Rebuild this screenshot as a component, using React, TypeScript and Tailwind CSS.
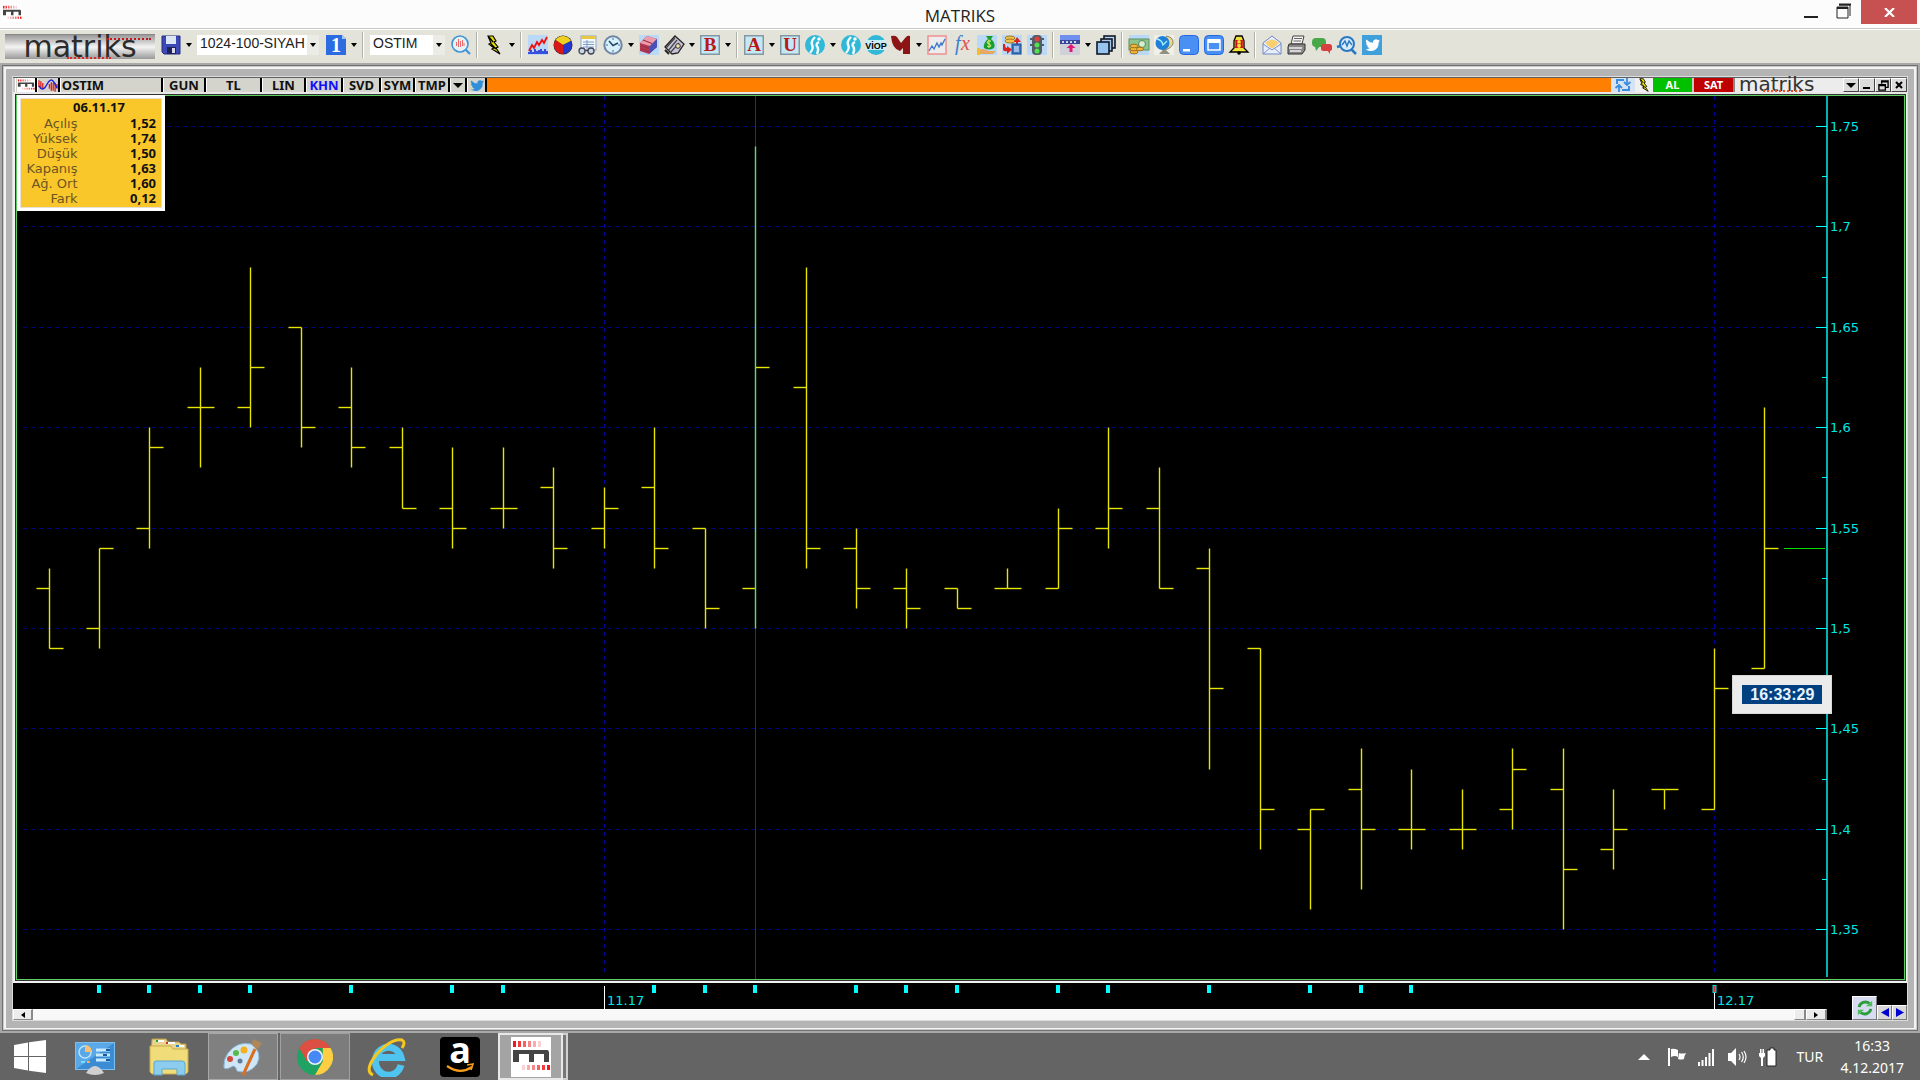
import React from "react";

/* ---------- chart data: open, high, low, close ---------- */
type Bar = [number, number, number, number];
const BARS: Bar[] = [
  [1.52, 1.53, 1.49, 1.49],
  [1.5, 1.54, 1.49, 1.54],
  [1.55, 1.6, 1.54, 1.59],
  [1.61, 1.63, 1.58, 1.61],
  [1.61, 1.68, 1.6, 1.63],
  [1.65, 1.65, 1.59, 1.6],
  [1.61, 1.63, 1.58, 1.59],
  [1.59, 1.6, 1.56, 1.56],
  [1.56, 1.59, 1.54, 1.55],
  [1.56, 1.59, 1.55, 1.56],
  [1.57, 1.58, 1.53, 1.54],
  [1.55, 1.57, 1.54, 1.56],
  [1.57, 1.6, 1.53, 1.54],
  [1.55, 1.55, 1.5, 1.51],
  [1.52, 1.74, 1.5, 1.63],
  [1.62, 1.68, 1.53, 1.54],
  [1.54, 1.55, 1.51, 1.52],
  [1.52, 1.53, 1.5, 1.51],
  [1.52, 1.52, 1.51, 1.51],
  [1.52, 1.53, 1.52, 1.52],
  [1.52, 1.56, 1.52, 1.55],
  [1.55, 1.6, 1.54, 1.56],
  [1.56, 1.58, 1.52, 1.52],
  [1.53, 1.54, 1.43, 1.47],
  [1.49, 1.49, 1.39, 1.41],
  [1.4, 1.41, 1.36, 1.41],
  [1.42, 1.44, 1.37, 1.4],
  [1.4, 1.43, 1.39, 1.4],
  [1.4, 1.42, 1.39, 1.4],
  [1.41, 1.44, 1.4, 1.43],
  [1.42, 1.44, 1.35, 1.38],
  [1.39, 1.42, 1.38, 1.4],
  [1.42, 1.42, 1.41, 1.42],
  [1.41, 1.49, 1.41, 1.47],
  [1.48, 1.61, 1.48, 1.54],
];
const PRICES: [number, string][] = [
  [1.75, "1,75"],
  [1.7, "1,7"],
  [1.65, "1,65"],
  [1.6, "1,6"],
  [1.55, "1,55"],
  [1.5, "1,5"],
  [1.45, "1,45"],
  [1.4, "1,4"],
  [1.35, "1,35"],
];
const MARKS = [1, 2, 3, 4, 6, 8, 9, 12, 13, 14, 16, 17, 18, 20, 21, 23, 25, 26, 27];
const CURSOR = 14;

const barX = (i: number) => Math.floor(32 + i * 50.47) + 0.5;
const priceY = (p: number) => Math.round(30 + (1.75 - p) * 2008) + 0.5;

function Chart() {
  return (
    <svg viewBox="0 0 1887 883" className="block h-auto w-full bg-black" role="img" aria-label="OSTIM">
      {PRICES.map(([p]) => (
        <line key={p} x1="6" x2="1800" y1={priceY(p)} y2={priceY(p)} stroke="#000080" strokeDasharray="4 4" />
      ))}
      {[11, 33].map((i) => (
        <line key={i} x1={barX(i)} x2={barX(i)} y1="0" y2="880" stroke="#0000a0" strokeDasharray="4 4" />
      ))}
      <line x1={barX(CURSOR)} x2={barX(CURSOR)} y1="0" y2="883" stroke="#800080" />
      {BARS.map(([o, h, l, c], i) => {
        const x = barX(i);
        return (
          <g key={i} stroke="#e6e600" strokeWidth="1.4">
            <line x1={x - 13} x2={x} y1={priceY(o)} y2={priceY(o)} />
            <line x1={x} x2={x + 14} y1={priceY(c)} y2={priceY(c)} />
            <line x1={x} x2={x} y1={priceY(h)} y2={priceY(l)} stroke={i === CURSOR ? "#5ee070" : "#e6e600"} />
          </g>
        );
      })}
      <line x1="1767" x2="1808" y1={priceY(1.54)} y2={priceY(1.54)} stroke="#00e000" />
      <line x1="1810" x2="1810" y1="0" y2="881" stroke="#00b4b4" strokeWidth="2" />
      {PRICES.map(([p, label]) => (
        <g key={p}>
          <line x1="1799" x2="1810" y1={priceY(p)} y2={priceY(p)} stroke="#00ffff" />
          {p > 1.35 && <line x1="1805" x2="1810" y1={priceY(p - 0.025)} y2={priceY(p - 0.025)} stroke="#00ffff" />}
          <text x="1813" y={priceY(p) + 4.5} fill="#00e5e5" className="font-['DejaVu_Sans',sans-serif] text-[13px]">
            {label}
          </text>
        </g>
      ))}
    </svg>
  );
}

function TimeAxis() {
  return (
    <svg viewBox="0 0 1814 25" className="block h-auto w-full">
      {MARKS.map((i) => (
        <rect key={i} x={barX(i) + 1.5} y="1" width="4" height="8" fill="#00ffff" />
      ))}
      <path d="M591.5 2V25M1701.5 2V25" stroke="#ffffff" />
      <rect x="1700" y="1.5" width="3" height="7" fill="#e03030" stroke="#00dddd" />
      <g fill="#00e5e5" className="font-['DejaVu_Sans',sans-serif] text-[13px]">
        <text x="594" y="21">11.17</text>
        <text x="1704" y="21">12.17</text>
      </g>
    </svg>
  );
}

/* ---------- icons ---------- */
function Ico({ children }: { children: React.ReactNode }) {
  return (
    <svg viewBox="0 0 20 20" className="h-5 w-5 overflow-visible">
      {children}
    </svg>
  );
}

function MMark({ className }: { className: string }) {
  return (
    <svg viewBox="0 0 40 40" className={className} preserveAspectRatio="none">
      <rect width="40" height="40" fill="#ffffff" />
      {[0, 1, 2, 3, 4, 5].map((i) => (
        <g key={i} fill="#f01818">
          <rect x={2 + i * 5} y="4" width="3" height="6" opacity={1 - i * 0.16} />
          <rect x={36 - i * 5} y="28" width="3" height="5" opacity={1 - i * 0.16} />
        </g>
      ))}
      <path d="M2 13H36Q38 13 38 16V25H33V17H23V25H18V17H8V25H2Z" fill="#444" />
    </svg>
  );
}

const bolt = (
  <>
    <path d="M4 1L9 1L12 6L10 7L14 12L12 13L16 19L8 14L10 13L5 9L7 8Z" fill="#e8e000" stroke="#000" strokeWidth="1.2" />
    <path d="M5 2L9 7M7 9L12 14" stroke="#000" strokeWidth="1.400" />
  </>
);
const tweet = (
  <path d="M18 5.2q-.8.5-1.6.6q.8-.5 1.2-1.4q-.9.5-1.7.7a3 3 0 0 0-5 2.7q-3.9-.2-6.5-3.3q-1.3 2.5.8 4.1q-.7 0-1.3-.4q.1 2.2 2.3 2.9q-.6.2-1.2 0q.7 1.9 2.8 2q-1.900 1.500-4.300 1.300q7.500 4 12-2q1.300-2.200 1.100-5.200q.9-.7 1.400-2Z" />
);
const sky = <rect width="20" height="20" fill="#b9d9f7" />;

const ICONS: Record<string, React.ReactNode> = {
  save: (
    <>
      <path d="M1 1H19V19H3L1 17Z" fill="#3c48b8" stroke="#252c80" />
      <rect x="5" y="1" width="10" height="8" fill="#dce4f8" />
      <rect x="6" y="12" width="9" height="7" fill="#1d2258" />
      <rect x="11" y="13" width="3" height="5" fill="#d8d8e8" />
    </>
  ),
  search: (
    <>
      <circle cx="9" cy="9" r="8" fill="#e8f0f4" stroke="#3d94d6" strokeWidth="1.600" />
      <path d="M14.500 14.500L19 19" stroke="#3d94d6" strokeWidth="2.200" />
      <path d="M5.500 7V11M7.500 4V12M9.500 6V12M11.500 5V11M13 8V11" stroke="#e86a6a" />
    </>
  ),
  bolt,
  chart: (
    <>
      {sky}
      <path d="M1 16L4 10L6 13L9 7L11 10L14 5L16 8L19 2" fill="none" stroke="#f01010" strokeWidth="1.800" />
      <path d="M1 19V17M3 19V15M5 19V17M7 19V14M9 19V16M11 19V15M13 19V14M15 19V16M17 19V14M19 19V16" stroke="#1020d0" strokeWidth="1.500" />
    </>
  ),
  pie: (
    <>
      <circle cx="10" cy="10" r="9.500" fill="#222" />
      <path d="M10 10L2.500 5A9 9 0 0 1 18 6Z" fill="#f0d020" />
      <path d="M10 10L18 6A9 9 0 0 1 10 19Z" fill="#2038d0" />
      <path d="M10 10L10 19A9 9 0 0 1 2.500 5Z" fill="#d81818" />
    </>
  ),
  report: (
    <>
      <rect x="3" y="1" width="15" height="14" fill="#f4f8ff" stroke="#8ea4c0" />
      <rect x="3" y="1" width="15" height="3" fill="#e8c840" />
      <path d="M5 7H16M5 9.500H16M5 12H16M9 5V14" stroke="#7d9cc8" />
      <circle cx="4" cy="16" r="3" fill="#c8d8e4" stroke="#445" strokeWidth="1.300" />
      <circle cx="13" cy="16" r="3" fill="#c8d8e4" stroke="#445" strokeWidth="1.300" />
      <path d="M7 15.500H10" stroke="#445" strokeWidth="1.500" />
    </>
  ),
  clock: (
    <>
      <circle cx="10" cy="10" r="8.700" fill="#d8f0fa" stroke="#7084a4" strokeWidth="2" />
      <path d="M6 6L10 10.500L15 8" fill="none" stroke="#204868" strokeWidth="1.600" />
      <path d="M10 3V5M10 15V17M3 10H5M15 10H17" stroke="#4070a0" />
    </>
  ),
  book: (
    <>
      {sky}
      <path d="M1 8L8 1L18 4V12L10 19L1 16Z" fill="#b03850" />
      <path d="M1 8L8 1L18 4L11 11Z" fill="#ee9cac" />
      <path d="M4 5L13 8.500M2 10.500L10 13.500M2 14L10 17" fill="none" stroke="#a03048" strokeWidth="1.300" />
      <path d="M11 11L18 4V12L10 19Z" fill="#4850b8" />
    </>
  ),
  ledger: (
    <>
      <path d="M1 12L11 1L20 9L14 18L8 19Z" fill="#c8c4d8" stroke="#222" strokeWidth="1.300" />
      <path d="M2 13L11 3M4 16L13 5M6 18L15 8" stroke="#444" strokeWidth="1.200" />
      <circle cx="14" cy="11" r="2.300" fill="#f4e8b0" stroke="#333" />
      <path d="M1 15L5 19" stroke="#222" strokeWidth="2" />
    </>
  ),
  m: <path d="M0 1Q4 0 6 2L10 8L15 2Q17 0 19 1V19H12V13L9 16Q1 14 0 1Z" fill="#8c1414" />,
  line: (
    <>
      <rect x="1" y="1" width="18" height="18" fill="#ececec" stroke="#f09090" strokeWidth="1.500" />
      <path d="M2 16L5 11L7 14L10 8L12 12L14 8L15 10L18 4" fill="none" stroke="#3a78c8" strokeWidth="1.300" />
    </>
  ),
  money: (
    <>
      {sky}
      <path d="M9 1H16L14 4Q19 8 17 13Q12 16 7 13Q6 8 11 4Z" fill="#1c9c30" />
      <path d="M14 6Q10 5 10 8Q14 9 14 11Q12 13 10 11M12 4.500V13" fill="none" stroke="#d8f070" />
      <path d="M0 15L6 14L12 16H19L16 19H0Z" fill="#e8a860" />
      <rect y="13" width="3" height="7" fill="#f4c020" />
    </>
  ),
  transfer: (
    <>
      {sky}
      <ellipse cx="8" cy="3" rx="5" ry="2" fill="#f0c050" stroke="#a87818" />
      <ellipse cx="8" cy="6" rx="5" ry="2" fill="#f0c050" stroke="#a87818" />
      <path d="M15 2L19 7H16V10H14V7H12Z" fill="#e02020" />
      <path d="M1 9V15Q3 17 5 16V19L10 14.500L5 11V13Q3 13 3 9Z" fill="#e02020" />
      <rect x="10" y="9" width="9" height="10" fill="#3878c8" stroke="#205090" />
      <path d="M12 12H17M12 14H17M12 16H17" stroke="#fff" />
    </>
  ),
  traffic: (
    <>
      {sky}
      <rect x="5" y="0" width="10" height="20" rx="4" fill="#545c64" />
      <circle cx="10" cy="4" r="2.500" fill="#e04040" />
      <circle cx="10" cy="10" r="2.500" fill="#50e050" />
      <circle cx="10" cy="16" r="2.500" fill="#50e050" />
      <path d="M3 4H5M3 10H5M15 4H17M15 10H17" stroke="#333" strokeWidth="1.500" />
    </>
  ),
  split: (
    <>
      <rect width="20" height="5" fill="#7090f0" />
      <rect y="5" width="20" height="4" fill="#384898" />
      <path d="M2 7H18" stroke="#fff" strokeWidth="1.300" strokeDasharray="2 2" />
      <rect y="9" width="20" height="11" fill="#d0d0d8" />
      <path d="M11 9L15.500 13H12.500V17H9.500V13H6.500Z" fill="#e01878" />
    </>
  ),
  windows: (
    <g stroke="#101828" strokeWidth="1.600">
      <rect x="8" y="1" width="11" height="12" fill="#b8d4f0" />
      <rect x="5" y="4" width="11" height="12" fill="#a8c8ec" />
      <rect x="1" y="7" width="12" height="12" fill="#98c4f0" />
    </g>
  ),
  cash: (
    <>
      {sky}
      <rect y="4" width="20" height="11" fill="#8cc490" stroke="#5a9060" />
      <circle cx="13" cy="9" r="3.500" fill="#d8ecd0" stroke="#508858" />
      <g fill="#f0b840" stroke="#a87010">
        <ellipse cx="5" cy="17" rx="4" ry="1.800" />
        <ellipse cx="5" cy="14" rx="4" ry="1.800" />
        <ellipse cx="5" cy="11" rx="4" ry="1.800" />
        <ellipse cx="11" cy="14" rx="3.500" ry="1.800" />
      </g>
    </>
  ),
  globe: (
    <>
      <rect width="20" height="20" fill="#f0f0e8" />
      <path d="M12 1Q20 2 19 9Q16 15 8 15" fill="#e8d890" stroke="#888060" />
      <circle cx="8.500" cy="8" r="7" fill="#2080d8" />
      <path d="M3 4Q8 5 9 10L13 6" stroke="#a0f0ff" strokeWidth="1.300" fill="none" />
      <path d="M5 19H16L12 15H9Z" fill="#909080" />
    </>
  ),
  min: (
    <>
      <rect x=".5" y=".5" width="19" height="19" rx="4" fill="#4a90f4" stroke="#2468e0" />
      <rect x="4" y="14" width="7" height="2.500" fill="#fff" />
    </>
  ),
  max: (
    <>
      <rect x=".5" y=".5" width="19" height="19" rx="4" fill="#4a90f4" stroke="#2468e0" />
      <path d="M4 5H16V15H4Z" fill="none" stroke="#fff" strokeWidth="1.500" />
      <rect x="4" y="4" width="12" height="4" fill="#fff" />
    </>
  ),
  mail: (
    <>
      <path d="M1 8L10 1L19 8V19H1Z" fill="#e8eefc" stroke="#7088c0" />
      <path d="M3 8Q10 1 17 8L10 14Z" fill="#f8d070" />
      <path d="M1 9L10 15L19 9M1 19L8 13M19 19L12 13" fill="none" stroke="#7c94cc" />
    </>
  ),
  print: (
    <>
      <path d="M6 1H17L15 9H4Z" fill="#f4f4f4" stroke="#444" />
      <path d="M7 3.500H15M6.500 6H14" stroke="#666" />
      <path d="M2 9H18V15L15 19H1V12Z" fill="#888" stroke="#333" />
      <path d="M2 13H15M3 16H14" stroke="#eee" strokeWidth="1.300" />
    </>
  ),
  chat: (
    <>
      <rect x="0" y="3" width="14" height="9" rx="4" fill="#48a848" />
      <path d="M3 11L4 16L8 11Z" fill="#48a848" />
      <rect x="9" y="9" width="11" height="7" rx="2.500" fill="#d84040" />
      <path d="M15 15L18 19V15Z" fill="#d84040" />
    </>
  ),
  inspect: (
    <>
      <circle cx="10" cy="9" r="7" fill="#d8ecfa" stroke="#2878c4" strokeWidth="2" />
      <path d="M5 10L8 6L10 11L12 6L15 10" fill="none" stroke="#2878c4" strokeWidth="1.400" />
      <path d="M14 14L19 19M0 12L3 11" stroke="#2878c4" strokeWidth="2.500" />
    </>
  ),
  twitter: (
    <>
      <rect width="20" height="20" fill="#40a0dc" />
      <g fill="#fff">{tweet}</g>
    </>
  ),
};

const swirl = (
  <>
    <circle cx="10" cy="10" r="10" fill="#30b8d8" />
    <path d="M10 2Q5 7 7.500 11Q8.500 14 5 18" fill="none" stroke="#f4fdff" strokeWidth="2.400" />
    <path d="M14 7Q10 9 12.500 12Q14 15 12 19" fill="none" stroke="#f4fdff" strokeWidth="2.400" />
    <circle cx="14" cy="4" r="1.800" fill="#f4fdff" />
  </>
);

const serif = "font-['Liberation_Serif',serif] font-bold";
function letter(ch: string) {
  return (
    <>
      <rect x=".75" y=".75" width="18.500" height="18.500" fill="#c4e8f4" stroke="#8498a4" strokeWidth="1.500" />
      <text x="10" y="16" textAnchor="middle" fill="#b81818" className={serif + " text-[19px]"}>
        {ch}
      </text>
    </>
  );
}
ICONS.B = letter("B");
ICONS.A = letter("A");
ICONS.U = letter("U");
ICONS.swirl = swirl;
ICONS.viop = (
  <>
    <circle cx="10" cy="10" r="10" fill="#30b8d8" />
    <rect x="0" y="5" width="20" height="10" fill="#c8eef6" />
    <text x="10" y="14" textAnchor="middle" fill="#000" className="font-['Liberation_Sans',sans-serif] text-[9px] font-bold">
      VİOP
    </text>
  </>
);
ICONS.fx = (
  <g className="font-['Liberation_Serif',serif] text-[20px] italic">
    <text x="3" y="15" fill="#3a80d0">
      f
    </text>
    <text x="9" y="15" fill="#e05050">
      x
    </text>
  </g>
);
ICONS.bell = (
  <>
    <path d="M7 1H13L15 6V13L19 17H1L5 13V6Z" fill="#f0e040" stroke="#000" strokeWidth="1.300" />
    <circle cx="10" cy="18" r="1.800" fill="#000" />
    <text x="10" y="13" textAnchor="middle" fill="#d01010" className={serif + " text-[13px]"}>
      H
    </text>
  </>
);
ICONS.one = (
  <>
    <path d="M0 0H16L20 4V20H0Z" fill="#2c6ce0" />
    <path d="M16 0L20 4H16Z" fill="#a8c8f8" />
    <text x="10" y="17" textAnchor="middle" fill="#fff" className={serif + " text-[20px]"}>
      1
    </text>
  </>
);

function Caret() {
  return (
    <svg viewBox="0 0 6 4" className="h-1 w-1.5">
      <path d="M0 0H6L3 4Z" fill="#000" />
    </svg>
  );
}
function Tool({ name, menu = false }: { name: string; menu?: boolean }) {
  return (
    <>
      <button aria-label={name} className="w-[25px] shrink-0">
        <Ico>{ICONS[name]}</Ico>
      </button>
      {menu && (
        <button aria-label={name + " menu"} className="flex h-5 w-[11px] shrink-0 items-center">
          <Caret />
        </button>
      )}
    </>
  );
}
function Sep() {
  return <div className="mr-[6px] h-[26px] w-0.5 shrink-0 border-l border-r border-l-[#b0b0aa] border-r-white" />;
}
function Combo({ label, value, className }: { label: string; value: string; className: string }) {
  return (
    <div className={"relative h-5 shrink-0 " + className}>
      <select
        aria-label={label}
        className="block h-5 w-full appearance-none bg-white pb-1 pl-[3px] font-['Liberation_Sans',sans-serif] text-[14px] leading-4 text-[#222]"
      >
        <option>{value}</option>
      </select>
      <span className="pointer-events-none absolute inset-y-0 right-0 flex w-3 items-center justify-center bg-[#ecece6]">
        <Caret />
      </span>
    </div>
  );
}

const TOOLS: [string, boolean?][] = [
  ["bolt", true], ["|"],
  ["chart"], ["pie"], ["report"], ["clock", true], ["book"], ["ledger", true], ["B", true], ["|"],
  ["A", true], ["U"], ["swirl", true], ["swirl"], ["viop"], ["m", true], ["line"], ["fx"], ["money"], ["transfer"], ["traffic"], ["|"],
  ["split", true], ["windows"], ["|"],
  ["cash"], ["globe"], ["min"], ["max"], ["bell"], ["|"],
  ["mail"], ["print"], ["chat"], ["inspect"], ["twitter"],
];

function Toolbar() {
  return (
    <div className="flex h-[34px] items-center border-t border-white bg-[#e3e3d9] pb-1 pl-[5px]">
      <div className="relative mt-1 mr-[6px] flex h-[25px] w-[150px] shrink-0 items-center justify-center border-t border-[#888] bg-linear-to-b from-[#9a9a9a] via-[#f4f4f4] to-[#9a9a9a] font-['DejaVu_Sans',sans-serif] text-[30px] leading-[24px] text-[#2c2c2c]">
        <span>matriks</span>
        <div className="absolute top-[3px] left-[102px] w-[44px] border-t-2 border-dotted border-[#c01818]" />
        <div className="absolute bottom-0 left-[62px] w-[44px] border-t-2 border-dotted border-[#e02828]" />
      </div>
      <Tool name="save" menu />
      <Combo label="Sayfa" value="1024-100-SIYAH" className="mr-[7px] w-[122px]" />
      <Tool name="one" menu />
      <Sep />
      <Combo label="Sembol" value="OSTIM" className="mr-[6px] w-[75px]" />
      <Tool name="search" />
      <Sep />
      {TOOLS.map(([n, menu], i) => (n === "|" ? <Sep key={i} /> : <Tool key={i} name={n} menu={menu} />))}
    </div>
  );
}

/* ---------- chart window header ---------- */
const cell = "flex h-full shrink-0 items-center justify-center border-l border-r-2 border-l-white border-r-black bg-[#d4d4cc]";
const small = "flex h-full w-4 shrink-0 items-center justify-center border border-t-white border-r-[#444] border-b-[#444] border-l-white bg-[#dcdcdc] text-black";

function ChartHeader() {
  return (
    <div className="flex h-[15px] items-stretch border-t border-[#606060] bg-[#c8c8c4] pl-0.5 font-['Noto_Sans',sans-serif] text-[13px] leading-[15px] font-bold text-[#111]">
      <button aria-label="Matriks" className={cell + " w-[22px]"}>
        <MMark className="h-[14px] w-[18px]" />
      </button>
      <button aria-label="Grafik" className={cell + " w-[23px]"}>
        <svg viewBox="0 0 21 13" className="h-[13px] w-[20px]">
          <path d="M1 1V8M3 2V10M5 4V10M12 5V10M14 3V12M16 4V12M18 4V13M20 5V10" stroke="#e02020" strokeWidth="1.400" />
          <path d="M1 7Q5 14 9 6T16 2T20 9" fill="none" stroke="#2020e0" strokeWidth="1.500" />
        </svg>
      </button>
      <button className={cell + " w-[103px] pr-[56px]"}>OSTIM</button>
      <button className={cell + " w-[43px]"}>GUN</button>
      <button className={cell + " w-[56px]"}>TL</button>
      <button className={cell + " w-[44px]"}>LIN</button>
      <button className={cell + " w-[37px] text-[#1010ff]"}>KHN</button>
      <button className={cell + " w-[38px]"}>SVD</button>
      <button className={cell + " w-[34px]"}>SYM</button>
      <button className={cell + " w-[35px]"}>TMP</button>
      <button aria-label="Menü" className={cell + " w-[17px]"}>
        <svg viewBox="0 0 10 5" className="h-[5px] w-[10px]"><path d="M0 0H10L5 5Z" /></svg>
      </button>
      <button aria-label="Twitter" className={cell + " w-[20px]"}>
        <svg viewBox="2 3 17 14" className="h-[13px] w-4" fill="#2f8fd8">{tweet}</svg>
      </button>
      <div className="min-w-0 flex-1 bg-[#ff8000]" />
      <button aria-label="Yenile" className="flex w-[24px] items-center justify-center bg-[#d4e4f4]">
        <svg viewBox="0 0 18 14" className="h-[14px] w-[18px]" fill="none" stroke="#3c8ce0" strokeWidth="2">
          <path d="M3 6V2H10M15 8V12H8" />
          <path d="M13 0V7M10 4L13 7L16.500 4M5 14V7M1.500 10L5 7L8 10" strokeWidth="1.800" />
        </svg>
      </button>
      <button aria-label="Emir" className="flex w-[18px] items-center justify-center bg-[#f0f0f0]">
        <svg viewBox="2 0 16 20" className="h-[14px] w-[14px]">{bolt}</svg>
      </button>
      <button className="mr-0.5 w-[39px] bg-[#00c000] pb-px text-[11px] leading-[12px] text-white">AL</button>
      <button className="w-[39px] bg-[#c00000] pb-px text-[11px] leading-[12px] text-white">SAT</button>
      <div className="relative flex w-[110px] border-l-2 border-[#888] bg-[#ececec] pl-1 font-['DejaVu_Sans',sans-serif] text-[20px] leading-[13px] font-normal text-[#333]">
        matriks
        <div className="absolute bottom-0 left-[28px] w-[38px] border-t-2 border-dotted border-[#f05020]" />
      </div>
      <button aria-label="Seçenekler" className={small}>
        <svg viewBox="0 0 10 5" className="h-[5px] w-[10px]"><path d="M0 0H10L5 5Z" /></svg>
      </button>
      <button aria-label="Küçült" className={small}>
        <svg viewBox="0 0 10 10" className="h-2.5 w-2.5"><path d="M1 8H8" stroke="#000" strokeWidth="2" /></svg>
      </button>
      <button aria-label="Geri yükle" className={small}>
        <svg viewBox="0 0 12 12" className="h-[11px] w-[11px]" fill="none" stroke="#000" strokeWidth="1.500">
          <path d="M4 4V1H11V8H8M4 2H11" />
          <path d="M1 5H8V11H1ZM1 6H8" />
        </svg>
      </button>
      <button aria-label="Kapat" className={small}>
        <svg viewBox="0 0 8 8" className="h-2 w-2"><path d="M1 1L7 7M7 1L1 7" stroke="#000" strokeWidth="2" /></svg>
      </button>
    </div>
  );
}

const INFO: [string, string][] = [
  ["Açılış", "1,52"],
  ["Yüksek", "1,74"],
  ["Düşük", "1,50"],
  ["Kapanış", "1,63"],
  ["Ağ. Ort", "1,60"],
  ["Fark", "0,12"],
];

function InfoBox() {
  return (
    <div className="absolute -top-px left-0 w-[148px] border-[3px] border-white">
      <table aria-label="OSTIM" className="w-full border border-[#e8e0d8] bg-[#fac72b] text-[13px] leading-[15px]">
        <thead>
          <tr>
            <th colSpan={2} className="h-[17px] pt-px pl-4 text-center align-top font-['Noto_Sans',sans-serif] font-bold text-[#111]">
              06.11.17
            </th>
          </tr>
        </thead>
        <tbody>
          {INFO.map(([k, v]) => (
            <tr key={k} className="h-[15px]">
              <th scope="row" className="w-[57px] p-0 text-right font-['DejaVu_Sans',sans-serif] leading-[15px] font-normal text-[#6b5522]">
                {k}
              </th>
              <td className="p-0 pr-[5px] text-right font-['Noto_Sans',sans-serif] leading-[15px] font-bold text-[#111]">{v}</td>
            </tr>
          ))}
          <tr className="h-0.5"><td colSpan={2} /></tr>
        </tbody>
      </table>
    </div>
  );
}

function BottomStrip() {
  const nav = "flex h-[15px] w-[15px] items-center justify-center border border-t-white border-r-[#777] border-b-[#777] border-l-white bg-[#d8d8d8]";
  const sb = "flex h-full items-center justify-center border border-t-white border-r-2 border-r-[#888] border-b-[#888] border-l-white bg-[#ececec]";
  return (
    <div className="flex items-end bg-black pt-px">
      <div className="min-w-0 flex-1">
        <TimeAxis />
        <div className="flex h-[11px] items-stretch bg-[#f8f8f8]">
          <button aria-label="Sola kaydır" className={sb + " w-5"}>
            <svg viewBox="0 0 4 6" className="h-1.5 w-1"><path d="M4 0V6L0 3Z" /></svg>
          </button>
          <div className="flex-1" />
          <div className={sb + " w-3"} />
          <button aria-label="Sağa kaydır" className={sb + " w-[21px]"}>
            <svg viewBox="0 0 4 6" className="h-1.5 w-1"><path d="M0 0V6L4 3Z" /></svg>
          </button>
        </div>
      </div>
      <div className="flex w-[80px] shrink-0 items-end justify-end">
        <button aria-label="Verileri yenile" className="flex h-[24px] w-[25px] items-center justify-center border border-t-white border-r-[#777] border-b-[#777] border-l-white bg-[#d8dcf0]">
          <svg viewBox="0 0 20 20" className="h-[18px] w-[20px]" fill="none" stroke="#2c9c3c" strokeWidth="3.200">
            <path d="M3.500 9A7 6.500 0 0 1 15 5M16.500 11A7 6.500 0 0 1 5 15" />
            <path d="M11 8H18V2Z M9 12H2V18Z" fill="#4cc058" stroke="none" />
          </svg>
        </button>
        <button aria-label="Önceki" className={nav}>
          <svg viewBox="0 0 8 9" className="h-[9px] w-2"><path d="M8 0V9L0 4.500Z" fill="#0000d0" /></svg>
        </button>
        <button aria-label="Sonraki" className={nav}>
          <svg viewBox="0 0 8 9" className="h-[9px] w-2"><path d="M0 0V9L8 4.500Z" fill="#0000d0" /></svg>
        </button>
      </div>
    </div>
  );
}

/* ---------- taskbar ---------- */
const slot = "flex h-[47px] w-[70px] shrink-0 items-center justify-center";

function Taskbar() {
  return (
    <footer className="flex h-[47px] shrink-0 items-center bg-[#646464] font-['Noto_Sans',sans-serif] text-[14px] text-white">
      <button aria-label="Başlat" className="flex w-[60px] shrink-0 items-center pl-[14px]">
        <svg viewBox="0 0 32 33" className="h-[33px] w-8" fill="#fff">
          <path d="M0 5L14 2.500V16H0ZM15 2.300L32 0V16H15ZM0 17H14V30.500L0 28ZM15 17H32V33L15 30.700Z" />
        </svg>
      </button>
      <button aria-label="Denetim Masası" className={slot}>
        <svg viewBox="0 0 40 36" className="h-9 w-10">
          <rect x=".5" y="3.500" width="39" height="27" fill="#3c8cd4" stroke="#7cc0f0" />
          <path d="M1 30L39 4H1Z" fill="#5aa8e8" />
          <circle cx="10" cy="13" r="6" fill="none" stroke="#b8e4fc" strokeWidth="1.500" />
          <path d="M10 13V6A7 7 0 0 1 17 13Z" fill="#f8c070" />
          <path d="M21 11H35M21 16H35M21 21H35" stroke="#c8ecff" strokeWidth="3" />
          <path d="M31 11H35M28 16H32M31 21H35" stroke="#1858a0" strokeWidth="2" />
          <path d="M6 23H10" stroke="#70e0ff" strokeWidth="2" />
          <path d="M12 23H15" stroke="#f8b050" strokeWidth="2" />
          <path d="M11 34Q20 20 29 34Q20 38 11 34Z" fill="#d0d0d0" />
        </svg>
      </button>
      <button aria-label="Dosya Gezgini" className={slot + " ml-1"}>
        <svg viewBox="0 0 40 40" className="h-10 w-10">
          <path d="M3 2H17L19 5H30L32 7H37V14H2Z" fill="#e8d48c" stroke="#b89c48" />
          <path d="M8 4H15M17 6H26M27 9H35" stroke="#fff" strokeWidth="2" />
          <path d="M7 4H9" stroke="#20a040" strokeWidth="2" />
          <path d="M17 6H19" stroke="#d03020" strokeWidth="2" />
          <path d="M27 9H30" stroke="#2080d0" strokeWidth="2" />
          <path d="M1 9H22L24 12H39V35L37 37H3L1 35Z" fill="#f0dc78" stroke="#c8ac48" />
          <path d="M5 38V26Q5 24 7 24H33Q36 24 36 27V38H28V32H13V38Z" fill="#8cccec" stroke="#58a8d8" />
        </svg>
      </button>
      <button aria-label="Paint" className={slot + " ml-1 border border-[#a8a8a8] bg-[#808080]"}>
        <svg viewBox="0 0 40 38" className="h-[38px] w-10">
          <path d="M5 15Q14 3 28 6Q40 14 34 26Q26 37 14 33Q13 28 10 28Q4 32 1 30Q0 22 5 15Z" fill="#cfe6f6" stroke="#8cb8dc" />
          <circle cx="17" cy="23" r="2.500" fill="#607c98" />
          <circle cx="7" cy="21" r="3" fill="#d84838" />
          <circle cx="13" cy="15" r="3" fill="#58b848" />
          <circle cx="21" cy="12" r="3.500" fill="#f4b020" />
          <path d="M32 11L20 37" stroke="#d87020" strokeWidth="3" />
          <path d="M29 6L30 1L39 5L34 12Z" fill="#b08858" />
        </svg>
      </button>
      <button aria-label="Google Chrome" className={slot + " ml-[2px] border border-[#a0a0a0] bg-[#7c7c7c]"}>
        <svg viewBox="0 0 36 36" className="h-9 w-9">
          <circle cx="18" cy="18" r="18" fill="#1ea362" />
          <path d="M2.400 9A18 18 0 0 1 33.600 9H18L10.200 13.500V22.500Z" fill="#dd4f43" />
          <path d="M33.600 9A18 18 0 0 1 18 36L25.800 22.500L25.800 9Z" fill="#ffcd42" />
          <path d="M2.400 9L10.200 22.500L18 9Z" fill="#dd4f43" />
          <circle cx="18" cy="18" r="8" fill="#f4f4f4" />
          <circle cx="18" cy="18" r="6.500" fill="#4688f4" />
        </svg>
      </button>
      <button aria-label="Internet Explorer" className={slot + " ml-[2px]"}>
        <svg viewBox="0 0 40 40" className="h-10 w-10" fill="none">
          <path d="M34 28A13 14 0 1 1 34 20.500H12" stroke="#50c4f0" strokeWidth="7" />
          <path d="M6 38Q-3 34 9 18Q24 1 35 3Q39 5 35 11" stroke="#f4c820" strokeWidth="3" />
        </svg>
      </button>
      <button aria-label="Amazon" className={slot + " ml-[3px]"}>
        <svg viewBox="0 0 40 40" className="h-10 w-10">
          <rect width="40" height="40" rx="4" fill="#000" />
          <text x="20" y="26" textAnchor="middle" fill="#fff" className="font-['Open_Sans',sans-serif] text-[36px] font-bold">a</text>
          <path d="M7 29Q20 38 32 30" fill="none" stroke="#f49c1c" strokeWidth="2.200" />
          <path d="M27 28L33 27L31 33" fill="none" stroke="#f49c1c" strokeWidth="1.600" />
        </svg>
      </button>
      <button aria-label="Matriks" className="ml-[3px] flex h-[47px] w-[65px] shrink-0 items-center justify-center border-2 border-[#e8e8e8] bg-[#a4a4a4]">
        <MMark className="h-10 w-10" />
      </button>
      <div className="h-[47px] w-[5px] border-2 border-l-0 border-[#d0d0d0] bg-[#777]" />
      <div className="ml-auto flex items-center">
        <button aria-label="Gizli simgeler" className="mr-[17px]">
          <svg viewBox="0 0 12 6" className="h-1.5 w-3"><path d="M6 0L12 6H0Z" fill="#fff" /></svg>
        </button>
        <svg viewBox="0 0 20 20" className="mr-[10px] h-5 w-5" fill="#fff">
          <path d="M1 1H3V19H1ZM4 2Q7 1 11 3V10Q8 8 4 10ZM12 6Q15 7 19 6Q17 9 17 12Q14 13 11 12Z" />
        </svg>
        <svg viewBox="0 0 18 18" className="mr-3 h-[18px] w-[18px]" fill="#fff">
          <path d="M1 14H3V18H1ZM4.500 12H6.500V18H4.500ZM8 9H10V18H8ZM11.500 5H13.500V18H11.500ZM15 1H17V18H15Z" />
        </svg>
        <svg viewBox="0 0 20 20" className="mr-3 h-5 w-5" fill="#fff">
          <path d="M1 6H4L9 1V19L4 14H1Z" />
          <path d="M12 7Q14 10 12 13M14.500 5Q18 10 14.500 15M17 4Q21 10 17 16" fill="none" stroke="#fff" strokeWidth="1.200" />
        </svg>
        <svg viewBox="0 0 19 20" className="h-5 w-[19px]" fill="#fff">
          <path d="M0 6H6V9L4 11V19H2V11L0 9ZM1 2H2.500V6H1ZM3.500 2H5V6H3.500Z" />
          <path d="M11 1H15V3H17V19H8V3H11Z" stroke="#222" />
        </svg>
        <span className="ml-[18px] w-[29px]">TUR</span>
        <div className="mr-[16px] ml-[15px] text-center leading-[22px]">
          <div>16:33</div>
          <div>4.12.2017</div>
        </div>
      </div>
    </footer>
  );
}

export default function App() {
  return (
    <div className="flex min-h-screen flex-col overflow-x-hidden bg-[#b4b4b4]">
      <header className="relative flex h-[29px] shrink-0 items-start justify-between border-b border-[#c8c8c8] bg-[#fcfcfc] font-['Open_Sans',sans-serif]">
        <MMark className="mt-1 ml-0.5 h-[18px] w-5" />
        <h1 className="absolute inset-x-0 top-0 text-center text-[17px] leading-[31px] text-[#222]">MATRIKS</h1>
        <div className="relative mr-[3px] flex h-6 items-start">
          <button aria-label="Simge durumuna küçült" className="mr-[17px] h-6 w-[15px]">
            <svg viewBox="0 0 15 24" className="h-6 w-[15px]"><path d="M0 17H14" stroke="#222" strokeWidth="2" /></svg>
          </button>
          <button aria-label="Önceki boyut" className="mr-[9px] h-6 w-4">
            <svg viewBox="0 0 16 24" className="h-6 w-4" fill="none" stroke="#222">
              <path d="M1 7H12V18H1ZM3 5H14V16" />
              <path d="M1 8H12M3 4.500H15" strokeWidth="2" />
            </svg>
          </button>
          <button aria-label="Kapat" className="flex h-6 w-14 items-center justify-center bg-[#c75050]">
            <svg viewBox="0 0 11 9" className="h-[9px] w-[11px]"><path d="M1 0L10 9M10 0L1 9" stroke="#fff" strokeWidth="2.200" /></svg>
          </button>
        </div>
      </header>
      <Toolbar />
      <main className="flex-1 bg-[#a8a8a8] px-0.5 pt-0.5 pb-px">
        <div className="border border-[#707070] bg-[#c8c8c8] p-px">
          <section className="border-2 border-b border-[#f4f4f4] bg-[#b4b4b4] px-1.5 pt-[7px] pb-[7px]">
            <div className="border border-[#dcdcdc] bg-[#dcdcdc]">
              <ChartHeader />
              <div className="border-t-2 border-b-[3px] border-t-[#e8e8e8] border-b-[#f0f0f0] bg-[#f0f0f0] pr-0.5 pl-[3px]">
                <div className="relative mt-px border border-[#5cd060] bg-black outline-1 outline-[#333]">
                  <Chart />
                  <InfoBox />
                  <div className="absolute top-[65.6%] left-[90.9%] border border-[#d8d8d8] bg-[#ebebeb] p-[9px]">
                    <time className="block w-[80px] bg-[#004080] text-center font-['Liberation_Sans',sans-serif] text-[16px] leading-[19px] font-bold text-[#e8f4ff]">
                      16:33:29
                    </time>
                  </div>
                </div>
              </div>
              <BottomStrip />
            </div>
          </section>
        </div>
      </main>
      <Taskbar />
    </div>
  );
}
